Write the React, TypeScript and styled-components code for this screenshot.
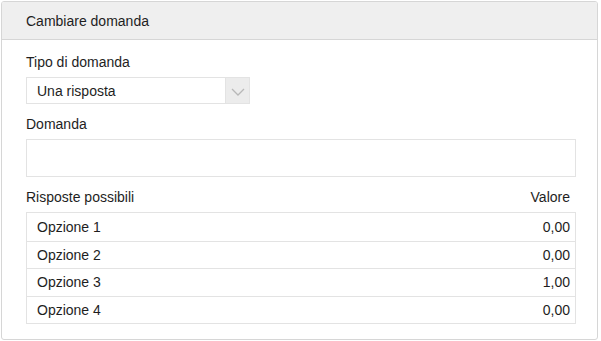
import styled, { createGlobalStyle } from "styled-components";

const options = [
  { label: "Opzione 1", value: "0,00" },
  { label: "Opzione 2", value: "0,00" },
  { label: "Opzione 3", value: "1,00" },
  { label: "Opzione 4", value: "0,00" },
];

export default function App() {
  return (
    <>
      <GlobalStyle />
      <Panel>
        <Header>Cambiare domanda</Header>
        <Body>
          <Label>Tipo di domanda</Label>
          <Select>
            <SelectValue>Una risposta</SelectValue>
            <SelectArrow>
              <svg width="14" height="8" viewBox="0 0 14 8" fill="none">
                <path d="M1 1l6 6 6-6" stroke="#b8b8b8" strokeWidth="1.3" />
              </svg>
            </SelectArrow>
          </Select>

          <Label $gap={12}>Domanda</Label>
          <Input />

          <HeadRow>
            <span>Risposte possibili</span>
            <span>Valore</span>
          </HeadRow>
          <Table>
            {options.map((o) => (
              <Row key={o.label}>
                <span>{o.label}</span>
                <span>{o.value}</span>
              </Row>
            ))}
          </Table>
        </Body>
      </Panel>
    </>
  );
}

const GlobalStyle = createGlobalStyle`
  body {
    margin: 0;
    padding: 1px;
    background: #ffffff;
    font-family: "Liberation Sans", Arial, sans-serif;
    font-size: 14px;
    color: #1e1e1e;
  }
`;

const Panel = styled.div`
  width: 597px;
  height: 339px;
  box-sizing: border-box;
  border: 1px solid #d6d6d6;
  border-radius: 3px;
  overflow: hidden;
  display: flex;
  flex-direction: column;
`;

const Header = styled.div`
  height: 38px;
  box-sizing: border-box;
  padding-left: 24px;
  display: flex;
  align-items: center;
  background: #efefef;
  border-bottom: 1px solid #d6d6d6;
`;

const Body = styled.div`
  padding: 14px 21px 0 24px;
  display: flex;
  flex-direction: column;
`;

const Label = styled.div<{ $gap?: number }>`
  line-height: 16px;
  margin-top: ${(p) => p.$gap ?? 0}px;
  margin-bottom: 7px;
`;

const Select = styled.div`
  width: 224px;
  height: 27px;
  box-sizing: border-box;
  border: 1px solid #e3e3e3;
  display: flex;
`;

const SelectValue = styled.div`
  flex: 1;
  display: flex;
  align-items: center;
  padding-left: 10px;
`;

const SelectArrow = styled.div`
  width: 23px;
  background: #ececec;
  border-left: 1px solid #e3e3e3;
  display: flex;
  align-items: center;
  justify-content: center;
  padding-top: 2px;
`;

const Input = styled.div`
  height: 38px;
  box-sizing: border-box;
  border: 1px solid #e3e3e3;
  margin-bottom: 12px;
`;

const HeadRow = styled.div`
  display: flex;
  justify-content: space-between;
  line-height: 16px;
  padding-right: 6px;
  margin-bottom: 7px;
`;

const Table = styled.div`
  border: 1px solid #e3e3e3;
`;

const Row = styled.div`
  height: 27.5px;
  box-sizing: border-box;
  display: flex;
  align-items: center;
  justify-content: space-between;
  padding: 0 5px 0 10px;

  & + & {
    border-top: 1px solid #e3e3e3;
  }
`;
